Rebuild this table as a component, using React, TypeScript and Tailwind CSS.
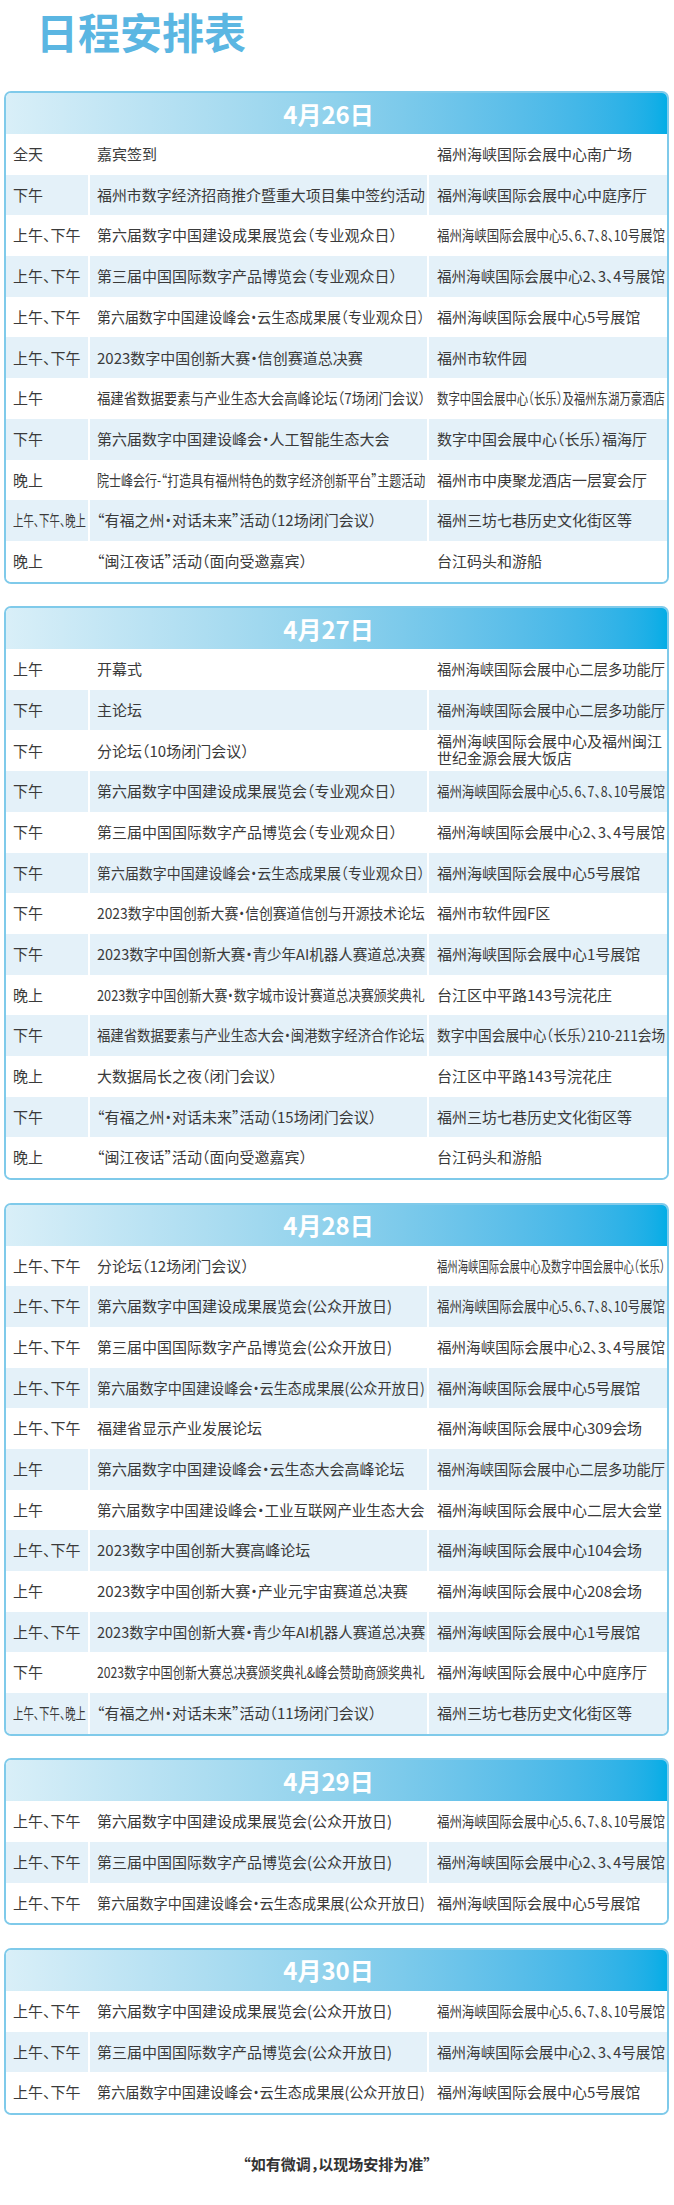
import { useLayoutEffect, useRef, useState } from "react";

type Row = [string, string, string];
type Day = { date: string; rows: Row[] };

const expo: Row[] = [
  ["上午、下午", "第六届数字中国建设成果展览会(公众开放日)", "福州海峡国际会展中心5、6、7、8、10号展馆"],
  ["上午、下午", "第三届中国国际数字产品博览会(公众开放日)", "福州海峡国际会展中心2、3、4号展馆"],
  ["上午、下午", "第六届数字中国建设峰会·云生态成果展(公众开放日)", "福州海峡国际会展中心5号展馆"],
];

const days: Day[] = [
  {
    date: "4月26日",
    rows: [
      ["全天", "嘉宾签到", "福州海峡国际会展中心南广场"],
      ["下午", "福州市数字经济招商推介暨重大项目集中签约活动", "福州海峡国际会展中心中庭序厅"],
      ["上午、下午", "第六届数字中国建设成果展览会（专业观众日）", "福州海峡国际会展中心5、6、7、8、10号展馆"],
      ["上午、下午", "第三届中国国际数字产品博览会（专业观众日）", "福州海峡国际会展中心2、3、4号展馆"],
      ["上午、下午", "第六届数字中国建设峰会·云生态成果展（专业观众日）", "福州海峡国际会展中心5号展馆"],
      ["上午、下午", "2023数字中国创新大赛·信创赛道总决赛", "福州市软件园"],
      ["上午", "福建省数据要素与产业生态大会高峰论坛（7场闭门会议）", "数字中国会展中心（长乐）及福州东湖万豪酒店"],
      ["下午", "第六届数字中国建设峰会·人工智能生态大会", "数字中国会展中心（长乐）福海厅"],
      ["晚上", "院士峰会行-“打造具有福州特色的数字经济创新平台”主题活动", "福州市中庚聚龙酒店一层宴会厅"],
      ["上午、下午、晚上", "“有福之州·对话未来”活动（12场闭门会议）", "福州三坊七巷历史文化街区等"],
      ["晚上", "“闽江夜话”活动（面向受邀嘉宾）", "台江码头和游船"],
    ],
  },
  {
    date: "4月27日",
    rows: [
      ["上午", "开幕式", "福州海峡国际会展中心二层多功能厅"],
      ["下午", "主论坛", "福州海峡国际会展中心二层多功能厅"],
      ["下午", "分论坛（10场闭门会议）", "福州海峡国际会展中心及福州闽江\n世纪金源会展大饭店"],
      ["下午", "第六届数字中国建设成果展览会（专业观众日）", "福州海峡国际会展中心5、6、7、8、10号展馆"],
      ["下午", "第三届中国国际数字产品博览会（专业观众日）", "福州海峡国际会展中心2、3、4号展馆"],
      ["下午", "第六届数字中国建设峰会·云生态成果展（专业观众日）", "福州海峡国际会展中心5号展馆"],
      ["下午", "2023数字中国创新大赛·信创赛道信创与开源技术论坛", "福州市软件园F区"],
      ["下午", "2023数字中国创新大赛·青少年AI机器人赛道总决赛", "福州海峡国际会展中心1号展馆"],
      ["晚上", "2023数字中国创新大赛·数字城市设计赛道总决赛颁奖典礼", "台江区中平路143号浣花庄"],
      ["下午", "福建省数据要素与产业生态大会·闽港数字经济合作论坛", "数字中国会展中心（长乐）210-211会场"],
      ["晚上", "大数据局长之夜（闭门会议）", "台江区中平路143号浣花庄"],
      ["下午", "“有福之州·对话未来”活动（15场闭门会议）", "福州三坊七巷历史文化街区等"],
      ["晚上", "“闽江夜话”活动（面向受邀嘉宾）", "台江码头和游船"],
    ],
  },
  {
    date: "4月28日",
    rows: [
      ["上午、下午", "分论坛（12场闭门会议）", "福州海峡国际会展中心及数字中国会展中心（长乐）"],
      ...expo,
      ["上午、下午", "福建省显示产业发展论坛", "福州海峡国际会展中心309会场"],
      ["上午", "第六届数字中国建设峰会·云生态大会高峰论坛", "福州海峡国际会展中心二层多功能厅"],
      ["上午", "第六届数字中国建设峰会·工业互联网产业生态大会", "福州海峡国际会展中心二层大会堂"],
      ["上午、下午", "2023数字中国创新大赛高峰论坛", "福州海峡国际会展中心104会场"],
      ["上午", "2023数字中国创新大赛·产业元宇宙赛道总决赛", "福州海峡国际会展中心208会场"],
      ["上午、下午", "2023数字中国创新大赛·青少年AI机器人赛道总决赛", "福州海峡国际会展中心1号展馆"],
      ["下午", "2023数字中国创新大赛总决赛颁奖典礼&峰会赞助商颁奖典礼", "福州海峡国际会展中心中庭序厅"],
      ["上午、下午、晚上", "“有福之州·对话未来”活动（11场闭门会议）", "福州三坊七巷历史文化街区等"],
    ],
  },
  { date: "4月29日", rows: expo },
  { date: "4月30日", rows: expo },
];

// squeeze text sideways when it is wider than its cell
const Cell = ({ text, className = "" }: { text: string; className?: string }) => {
  const boxRef = useRef<HTMLDivElement>(null);
  const textRef = useRef<HTMLSpanElement>(null);
  const [scale, setScale] = useState(1);

  useLayoutEffect(() => {
    if (!boxRef.current || !textRef.current) return;
    const room = boxRef.current.clientWidth;
    const need = textRef.current.offsetWidth;
    setScale(need > room ? room / need : 1);
  }, [text]);

  return (
    <div className={`flex items-center pl-[7px] pr-[2px] min-w-0 ${className}`}>
      <div ref={boxRef} className="w-full min-w-0">
        <span
          ref={textRef}
          className="inline-block whitespace-pre origin-left leading-[17px]"
          style={scale < 1 ? { transform: `scaleX(${scale})` } : undefined}
        >
          {text}
        </span>
      </div>
    </div>
  );
};

const DayCard = ({ day }: { day: Day }) => {
  return (
    <section className="rounded-[7px] border-2 border-[#7fcaea] overflow-hidden bg-white">
      <div className="h-[41px] flex items-center justify-center pr-4 bg-linear-to-r from-[#d9eff8] via-[#8ed1ec] to-[#02ade6]">
        <h2 className="text-white font-bold text-[24px] leading-none">{day.date}</h2>
      </div>
      {day.rows.map((row, i) => (
        <div
          key={i}
          className={`grid grid-cols-[84px_339px_1fr] h-[40.7px] ${
            i % 2 ? "bg-[#e4f1f9]" : "bg-white"
          }`}
        >
          <Cell text={row[0]} className="border-r-2 border-white" />
          <Cell text={row[1]} className="border-r-2 border-white" />
          <Cell text={row[2]} className="pl-[8px]" />
        </div>
      ))}
    </section>
  );
};

export default function App() {
  return (
    <div className="bg-white min-h-screen pt-[10px] pb-[30px] font-['Noto_Sans_CJK_SC',sans-serif] [font-feature-settings:'halt'] text-[#3a3a3a] text-[15px]">
      <h1 className="pl-[36px] text-[42px] leading-none font-bold text-[#5bb6e2]">日程安排表</h1>

      <div className="mt-[39px] pl-1 pr-[5px] flex flex-col gap-[22.5px]">
        {days.map((day) => (
          <DayCard key={day.date} day={day} />
        ))}
      </div>

      <p className="mt-[41px] text-center font-bold text-[15px] leading-none text-[#333]">
        “如有微调，以现场安排为准”
      </p>
    </div>
  );
}
